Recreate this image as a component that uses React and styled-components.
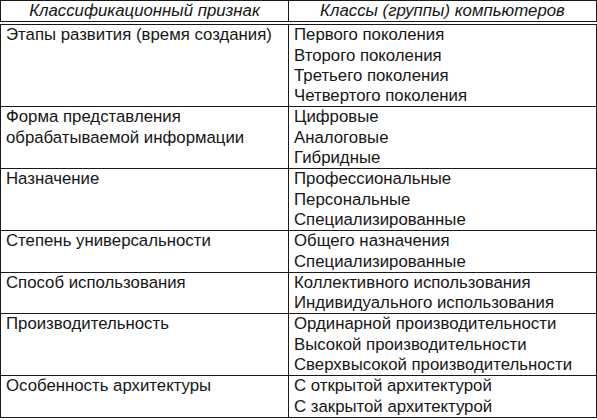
import React from "react";
import styled, { createGlobalStyle } from "styled-components";

const Global = createGlobalStyle`
  html, body { margin: 0; padding: 0; background: #fff; }
  body { font-family: "Liberation Sans", Arial, sans-serif; color: #161616; }
`;

const Table = styled.table`
  width: 596px;
  table-layout: fixed;
  border-collapse: collapse;
  font-size: 16.8px;
  line-height: 20.3px;
`;

const Col = styled.col`
  width: ${(p) => p.$w}px;
`;

const HeadCell = styled.th`
  font-weight: normal;
  font-style: italic;
  text-align: center;
  padding: 0 4px;
  height: 20px;
  border: 1px solid #1a1a1a;
  border-bottom: 4px double #1a1a1a;
`;

const Cell = styled.td`
  vertical-align: top;
  text-align: left;
  padding: 0 4px 0 5px;
  border: 1px solid #1a1a1a;
  white-space: nowrap;
`;

const Line = styled.div``;

const rows = [
  [["Этапы развития (время создания)"], ["Первого поколения", "Второго поколения", "Третьего поколения", "Четвертого поколения"]],
  [["Форма представления", "обрабатываемой информации"], ["Цифровые", "Аналоговые", "Гибридные"]],
  [["Назначение"], ["Профессиональные", "Персональные", "Специализированные"]],
  [["Степень универсальности"], ["Общего назначения", "Специализированные"]],
  [["Способ использования"], ["Коллективного использования", "Индивидуального использования"]],
  [["Производительность"], ["Ординарной производительности", "Высокой производительности", "Сверхвысокой производительности"]],
  [["Особенность архитектуры"], ["С открытой архитектурой", "С закрытой архитектурой"]],
];

export default function App() {
  return (
    <>
      <Global />
      <Table>
        <colgroup>
          <Col $w={288} />
          <Col $w={308} />
        </colgroup>
        <thead>
          <tr>
            <HeadCell>Классификационный признак</HeadCell>
            <HeadCell>Классы (группы) компьютеров</HeadCell>
          </tr>
        </thead>
        <tbody>
          {rows.map((r, i) => (
            <tr key={i}>
              {r.map((c, j) => (
                <Cell key={j}>
                  {c.map((t, k) => (
                    <Line key={k}>{t}</Line>
                  ))}
                </Cell>
              ))}
            </tr>
          ))}
        </tbody>
      </Table>
    </>
  );
}
